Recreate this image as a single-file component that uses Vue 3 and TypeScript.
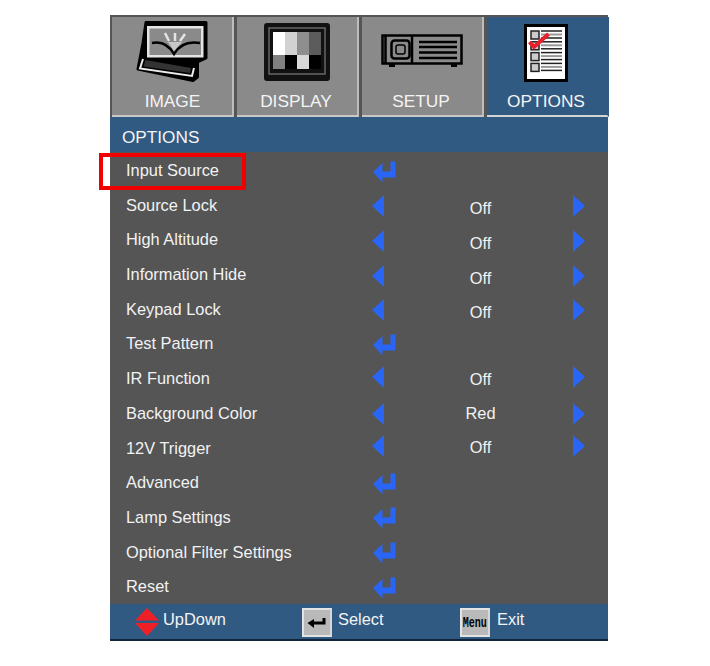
<script setup lang="ts">
interface Row { label: string; kind: 'enter' | 'value'; value?: string; shift?: string }
const rows: Row[] = [
  { label: 'Input Source', kind: 'enter' },
  { label: 'Source Lock', kind: 'value', value: 'Off', shift: 'low' },
  { label: 'High Altitude', kind: 'value', value: 'Off', shift: 'low' },
  { label: 'Information Hide', kind: 'value', value: 'Off', shift: 'low' },
  { label: 'Keypad Lock', kind: 'value', value: 'Off', shift: 'low' },
  { label: 'Test Pattern', kind: 'enter' },
  { label: 'IR Function', kind: 'value', value: 'Off', shift: 'mid' },
  { label: 'Background Color', kind: 'value', value: 'Red', shift: 'flat' },
  { label: '12V Trigger', kind: 'value', value: 'Off', shift: 'high' },
  { label: 'Advanced', kind: 'enter' },
  { label: 'Lamp Settings', kind: 'enter' },
  { label: 'Optional Filter Settings', kind: 'enter' },
  { label: 'Reset', kind: 'enter' },
]
const patchesTop = ['#ffffff', '#d2d2d2', '#8e8e8e', '#5c5c5c']
const patchesBottom = ['#808080', '#000000', '#d8d8d8', '#000000']
const checkRows = [0, 1, 2, 3]
</script>

<template>
  <div class="page">
    <div class="panel">
      <div class="tabs">
        <div class="tab">
          <svg class="icon image" width="84" height="64" viewBox="0 0 84 64">
            <path d="M16 2.500 H76 V38 L67.500 42 V57 L63 60.500 L8 49 L13 23 Z" fill="#000" stroke="#000" stroke-width="3" stroke-linejoin="round" />
            <path d="M13 39 L10 48.500 L62 56 L64 48" fill="none" stroke="#ececec" stroke-width="2" />
            <path d="M15.500 40 L13.500 46.500 L60 53 L61 48 Z" fill="#333" />
            <rect x="18.250" y="7.250" width="54" height="29" fill="#8a8a8a" stroke="#e4e4e4" stroke-width="2.5" />
            <path d="M22 23 Q36 20 44 34 Q52 20 70 23" fill="none" stroke="#000" stroke-width="2.5" />
            <path d="M38 22 L52 22 L44 31 Z" fill="#c8c8c8" />
            <path d="M35 13 L39 21 M45 13 V21 M55 14 L50 21" stroke="#e4e4e4" stroke-width="2.500" fill="none" />
          </svg>
          <span class="tab-label first-label">IMAGE</span>
        </div>
        <div class="tab">
          <svg class="icon" width="68" height="60" viewBox="0 0 68 60">
            <rect x="1" y="1" width="66" height="58" rx="3" fill="#111" />
            <rect x="6" y="6" width="56" height="46" fill="none" stroke="#666" stroke-width="1.5" />
            <rect v-for="(c, i) in patchesTop" :key="'t' + i" :x="10 + i * 12" y="10" width="12" height="23" :fill="c" />
            <rect v-for="(c, i) in patchesBottom" :key="'b' + i" :x="10 + i * 12" y="33" width="12" height="14" :fill="c" />
          </svg>
          <span class="tab-label">DISPLAY</span>
        </div>
        <div class="tab">
          <svg class="icon projector" width="82" height="34" viewBox="0 0 82 34">
            <rect x="1.5" y="1.5" width="79" height="28" fill="#8a8a8a" stroke="#000" stroke-width="2.5" />
            <path d="M4.500 1 V30 M31 1 V30" stroke="#000" stroke-width="2.5" />
            <rect x="10.500" y="6.500" width="18" height="18" rx="3" fill="none" stroke="#000" stroke-width="2.5" />
            <rect x="15" y="11" width="9" height="9" rx="2" fill="none" stroke="#000" stroke-width="1.5" />
            <path d="M38 8 H76 M38 13 H76 M38 18.500 H76 M38 24 H76" stroke="#000" stroke-width="2.5" />
            <rect x="8" y="30" width="6" height="3" fill="#000" />
            <rect x="70" y="30" width="6" height="3" fill="#000" />
          </svg>
          <span class="tab-label">SETUP</span>
        </div>
        <div class="tab active">
          <svg class="icon checklist" width="44" height="58" viewBox="0 0 44 58">
            <rect x="1.5" y="1.5" width="41" height="55" fill="#fff" stroke="#000" stroke-width="3" />
            <g v-for="r in checkRows" :key="r">
              <rect x="7" :y="7 + r * 10.8" width="8" height="8" fill="#ccc" stroke="#222" stroke-width="1.5" />
              <path :d="`M17 ${7 + r * 10.8} H38`" stroke="#222" stroke-width="1.5" />
              <path :d="`M17 ${10.5 + r * 10.8} H38`" stroke="#999" stroke-width="2" />
              <path :d="`M17 ${14 + r * 10.8} H38`" stroke="#222" stroke-width="1.5" />
            </g>
            <path d="M5.500 18 L10 23 L24.500 10" fill="none" stroke="#e8202c" stroke-width="4" />
          </svg>
          <span class="tab-label">OPTIONS</span>
        </div>
      </div>

      <div class="title">OPTIONS</div>

      <div class="rows">
        <div class="highlight"></div>
        <div v-for="row in rows" :key="row.label" class="row">
          <span class="label">{{ row.label }}</span>
          <template v-if="row.kind === 'enter'">
            <svg class="enter" width="24" height="22" viewBox="0 0 24 22">
              <path d="M17.500 0.500 H22.500 V16.500 H9.500 V21.500 L0 11 L9.500 2 V10.500 H17.500 Z" fill="#2a66f5" stroke-linejoin="round" />
            </svg>
          </template>
          <template v-else>
            <svg class="tri left" :class="row.shift" width="12" height="22" viewBox="0 0 12 22"><path d="M12 0 V22 L0 11 Z" fill="#2a66f5" /></svg>
            <span class="value" :class="row.shift">{{ row.value }}</span>
            <svg class="tri right" :class="row.shift" width="12" height="22" viewBox="0 0 12 22"><path d="M0 0 V22 L12 11 Z" fill="#2a66f5" /></svg>
          </template>
        </div>
      </div>

      <div class="footer">
        <div class="foot-item first">
          <svg width="26" height="28" viewBox="0 0 26 28">
            <path d="M13 0 L25 12.500 H1 Z M1 15 H25 L13 28 Z" fill="#ee2027" />
          </svg>
          <span class="foot-text">UpDown</span>
        </div>
        <div class="foot-item second">
          <div class="key">
            <svg width="20" height="12" viewBox="0 0 20 12">
              <path d="M15.500 1 H18.500 V7.500 H7 V11 L0.500 6 L7 2 V4.500 H15.500 Z" fill="#000" />
            </svg>
          </div>
          <span class="foot-text">Select</span>
        </div>
        <div class="foot-item third">
          <div class="key"><span class="menu">Menu</span></div>
          <span class="foot-text">Exit</span>
        </div>
      </div>
    </div>
  </div>
</template>

<style>
html, body { margin: 0; background: #fff; }
</style>

<style scoped>
.page {
  width: 710px;
  height: 666px;
  padding: 15px 0 0 110px;
  box-sizing: border-box;
  font-family: "Liberation Sans", Arial, sans-serif;
  color: #f2f2f2;
}
.panel {
  width: 498px;
  height: 626px;
  display: flex;
  flex-direction: column;
  background: #555555;
  border-bottom: 2px solid #10243c;
  box-sizing: border-box;
}
.tabs {
  height: 102px;
  display: grid;
  grid-template-columns: repeat(4, 122px);
  column-gap: 3px;
  padding: 2px 1px 0 2px;
  box-sizing: border-box;
}
.tab {
  height: 100px;
  position: relative;
  background: #8a8a8a;
  border-right: 2px solid #bdbdbd;
  border-bottom: 2px solid #c8c8c8;
  box-sizing: border-box;
  display: flex;
  flex-direction: column;
  align-items: center;
}
.tab.active { background: #315a82; border-right-color: #315a82; border-bottom-color: #d4d4d4; }
.icon { position: absolute; top: 5px; left: 50%; transform: translateX(-50%); }
.icon.image { top: 3px; }
.icon.projector { top: 17px; }
.icon.checklist { top: 7px; transform: translateX(-23px); }
.tab-label {
  margin-top: 74px;
  font-size: 17.3px;
  line-height: 20px;
  color: #f4f4f4;
  transform: translateX(-1px);
}
.tab-label.first-label { transform: translateX(0.5px); }
.title {
  height: 35px;
  line-height: 41px;
  padding-left: 12px;
  background: #315a82;
  font-size: 17.2px;
  color: #f4f4f4;
}
.rows {
  position: relative;
  flex: 1;
  display: flex;
  flex-direction: column;
}
.highlight {
  position: absolute;
  left: -11px;
  top: 1px;
  width: 147px;
  height: 37px;
  border: 4px solid #f00000;
  box-sizing: border-box;
  pointer-events: none;
}
.row {
  height: 34.7px;
  display: grid;
  grid-template-columns: 246px 12px 189px 12px;
  align-items: center;
  padding-left: 16px;
  font-size: 16.4px;
  box-sizing: border-box;
}
.label { grid-column: 1; line-height: 36px; margin-top: 0; white-space: nowrap; }
.enter { grid-column: 2 / 4; margin-top: 3px; margin-left: 1px; }
.tri.low { margin-top: 3px; }
.tri.mid { margin-top: -2px; }
.tri.flat { margin-top: 2px; }
.tri.high { margin-top: -3px; }
.tri.left { grid-column: 2; }
.tri.right { grid-column: 4; }
.value { grid-column: 3; text-align: center; margin-left: 4px; line-height: 20px; }
.value.low { margin-top: 7px; }
.value.mid { margin-top: 1px; }
.value.flat { margin-top: 1px; }
.value.high { margin-top: -1px; }
.footer {
  height: 35px;
  background: #315a82;
  display: flex;
  padding-left: 24px;
  box-sizing: border-box;
}
.foot-item { display: flex; align-items: flex-start; padding-top: 4px; box-sizing: border-box; }
.first { width: 168px; gap: 3px; }
.second { width: 158px; gap: 6px; }
.third { gap: 7px; }
.foot-text { font-size: 16.4px; line-height: 23px; color: #f4f4f4; }
.key {
  width: 30px;
  height: 29px;
  background: #b9b9b9;
  border: 2px solid #e4e4e4;
  border-right-color: #d8d8d8;
  box-sizing: border-box;
  display: flex;
  align-items: center;
  justify-content: center;
}
.menu {
  font-family: "Liberation Mono", monospace;
  font-size: 14px;
  font-weight: 700;
  letter-spacing: 0;
  color: #000;
  transform: scaleX(0.72);
}
</style>
